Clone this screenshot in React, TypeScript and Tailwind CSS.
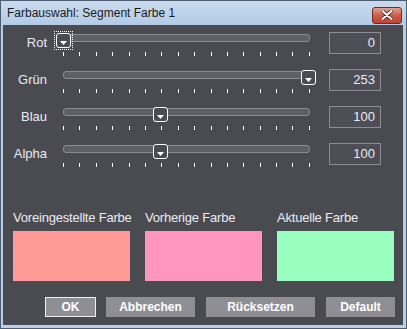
import React from 'react';

const font = { fontFamily: '"Liberation Sans", Arial, sans-serif' };

const kanaele = [
  { name: 'Rot', value: 0, focus: true },
  { name: 'Grün', value: 253, focus: false },
  { name: 'Blau', value: 100, focus: false },
  { name: 'Alpha', value: 100, focus: false },
];

const TRACK = 247;

function Regler({ value, focus }: { value: number; focus: boolean }) {
  const center = 8 + (value / 255) * TRACK;
  return (
    <div className="relative h-full w-[263px] px-[8px] pt-[2px]">
      <div className="h-[8px] rounded-[3px] border border-[#8b8b91] bg-[#5f5f66]" />
      <div className="mt-[10px] flex justify-between">
        {Array.from({ length: 16 }).map((_, i) => (
          <div key={i} className="h-[4px] w-[1px] bg-white" />
        ))}
      </div>
      <div
        className="absolute top-[1px] h-[15px] w-[15px]"
        style={{ left: Math.round(center - 7) }}
      >
        {focus && (
          <div className="absolute -inset-[2px] border border-dotted border-white" />
        )}
        <div className="flex h-full w-full items-end justify-center rounded-[3px] border-[1.5px] border-white bg-[#4b4b53] pb-[2px]">
          <svg width="7" height="4" viewBox="0 0 7 4">
            <path d="M0 0H7L3.5 4Z" fill="#fff" />
          </svg>
        </div>
      </div>
    </div>
  );
}

export default function App() {
  return (
    <div className="h-[329px] w-[407px] border border-[#4e5c6e] bg-[#b7cfe9]" style={font}>
      <div className="flex h-[24px] items-center justify-between bg-gradient-to-b from-[#c9dbef] to-[#b3cbe7] pl-[6px] pr-[4px]">
        <span className="text-[12px] text-[#1b1b1b]">Farbauswahl: Segment Farbe 1</span>
        <button className="mt-[4px] flex h-[17px] w-[30px] items-center justify-center rounded-[3px] border border-[#6e2a24] bg-gradient-to-b from-[#e4a194] via-[#cf5b48] to-[#c1412f]">
          <svg width="12" height="10" viewBox="0 0 12 10">
            <path d="M1.5 1 L10.5 9 M10.5 1 L1.5 9" stroke="#4a2520" strokeWidth="3.6" strokeLinecap="round" />
            <path d="M1.5 1 L10.5 9 M10.5 1 L1.5 9" stroke="#fff" strokeWidth="2" strokeLinecap="round" />
          </svg>
        </button>
      </div>
      <div className="ml-[2px] h-[300px] w-[400px] bg-[#4a4a51] pt-[7px] text-[#eaeaf2]">
        {kanaele.map((k) => (
          <div key={k.name} className="flex h-[37px] items-start">
            <div className="mt-[3px] w-[44px] text-right text-[13px] leading-[16px]">{k.name}</div>
            <div className="ml-[8px] h-full">
              <Regler value={k.value} focus={k.focus} />
            </div>
            <div className="ml-[11px] flex h-[22px] w-[52px] items-center justify-end border border-[#8c8c92] bg-[#4e4e56] pr-[5px] text-[13px]">
              {k.value}
            </div>
          </div>
        ))}

        <div className="mt-[30px] flex gap-[15px] pl-[10px]">
          {[
            { label: 'Voreingestellte Farbe', color: 'bg-[#ff9a97]' },
            { label: 'Vorherige Farbe', color: 'bg-[#ff96c0]' },
            { label: 'Aktuelle Farbe', color: 'bg-[#99ffc1]' },
          ].map((f) => (
            <div key={f.label} className="w-[117px]">
              <div className="h-[16px] whitespace-nowrap text-[13px] leading-[16px] tracking-[-0.2px]">{f.label}</div>
              <div className={`mt-[5px] h-[50px] ${f.color}`} />
            </div>
          ))}
        </div>

        <div className="mt-[16px] flex justify-end gap-[10px] pr-[8px] text-[12px] font-bold text-white">
          <button className="h-[20px] w-[51px] border border-[#f0f0f0] bg-[#8e8e94]">OK</button>
          <button className="h-[20px] w-[89px] bg-[#8e8e94]">Abbrechen</button>
          <button className="ml-[1px] h-[20px] w-[109px] bg-[#8e8e94]">Rücksetzen</button>
          <button className="ml-[1px] h-[20px] w-[69px] bg-[#8e8e94]">Default</button>
        </div>
      </div>
    </div>
  );
}
